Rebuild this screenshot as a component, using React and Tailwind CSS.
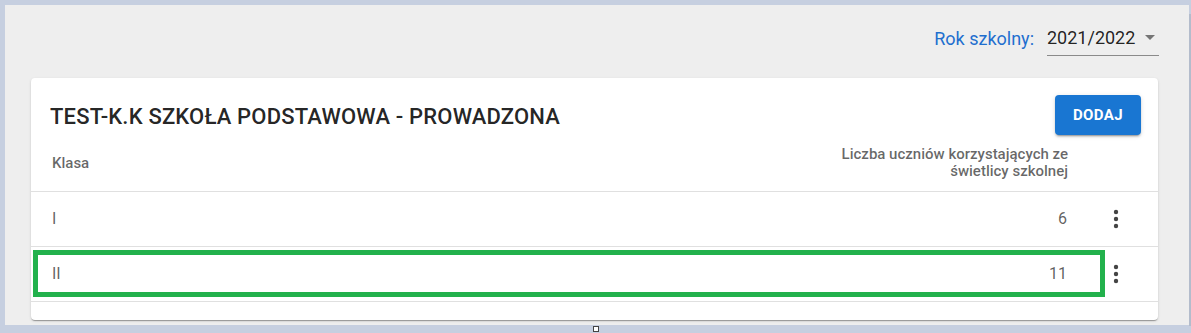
import React from 'react'

const rows = [
    { name: 'I', count: 6 },
    { name: 'II', count: 11 },
]

function Kebab() {
    return (
        <svg width="24" height="24" viewBox="0 0 24 24" className="fill-[#444]">
            <circle cx="12" cy="5" r="2.2" />
            <circle cx="12" cy="12" r="2.2" />
            <circle cx="12" cy="19" r="2.2" />
        </svg>
    )
}

export default function App() {
    return (
        <div className="relative w-[1191px] h-[333px] overflow-hidden bg-[#c6cfe0] pt-[5px] pl-[5px] font-['Roboto',sans-serif]">
            <div className="w-[1184px] h-[320px] bg-[#eeeeee] flex flex-col pt-[19px]">
                {/* school year picker */}
                <div className="flex justify-end items-center pr-[30px]">
                    <span className="text-[18px] text-[#1f6fcf] mr-[13px] pb-[4px]">Rok szkolny:</span>
                    <div className="w-[112px] h-[32px] pb-[4px] flex items-center justify-between border-b border-[#8a8a8a]">
                        <span className="text-[18px] text-[rgba(0,0,0,0.87)]">2021/2022</span>
                        <svg width="12" height="6" viewBox="0 0 12 6" className="mr-[3px] fill-[#757575]">
                            <path d="M1 0h10L6 5z" />
                        </svg>
                    </div>
                </div>

                <div className="relative ml-[26px] mr-[31px] mt-[22px] bg-white rounded-[4px] shadow-[0_2px_1px_-1px_rgba(0,0,0,0.2),0_1px_1px_0_rgba(0,0,0,0.14),0_1px_3px_0_rgba(0,0,0,0.12)] pb-[18px]">
                    <div className="flex items-center justify-between pl-[19px] pr-[17px] pt-[17px]">
                        <h2 className="text-[22px] font-medium tracking-[0.18px] text-[rgba(0,0,0,0.87)] uppercase pt-[3px]">
                            TEST-K.K SZKOŁA PODSTAWOWA - PROWADZONA
                        </h2>
                        <button className="h-[40px] w-[86px] rounded-[4px] bg-[#1976d2] text-white text-[15px] font-bold tracking-[0.4px] shadow-[0_3px_1px_-2px_rgba(0,0,0,0.2),0_2px_2px_0_rgba(0,0,0,0.14),0_1px_5px_0_rgba(0,0,0,0.12)]">
                            DODAJ
                        </button>
                    </div>

                    {/* table head */}
                    <div className="flex items-center h-[57px] border-b border-[#e0e0e0] text-[15px] font-medium text-[rgba(0,0,0,0.6)]">
                        <div className="flex-1 pl-[21px]">Klasa</div>
                        <div className="text-right leading-[17px]">
                            <div>Liczba uczniów korzystających ze</div>
                            <div>świetlicy szkolnej</div>
                        </div>
                        <div className="w-[90px]" />
                    </div>

                    {rows.map((r) => (
                        <div key={r.name} className="flex items-center h-[55px] border-b border-[#e0e0e0] text-[16px] text-[rgba(0,0,0,0.64)]">
                            <div className="flex-1 pl-[21px]">{r.name}</div>
                            <div className="text-right pr-[1px]">{r.count}</div>
                            <div className="w-[90px] pl-[36px] flex items-center">
                                <Kebab />
                            </div>
                        </div>
                    ))}

                    {/* highlight annotation */}
                    <div className="absolute left-[2px] top-[172px] w-[1072px] h-[47px] border-[5px] border-[#22b14c] pointer-events-none" />
                </div>
            </div>
            <div className="absolute right-0 top-[14px] w-[2px] h-[312px] bg-[#b3bccc]" />
            <div className="absolute left-[593px] top-[326px] w-[6px] h-[6px] border border-[#444] bg-white" />
        </div>
    )
}
